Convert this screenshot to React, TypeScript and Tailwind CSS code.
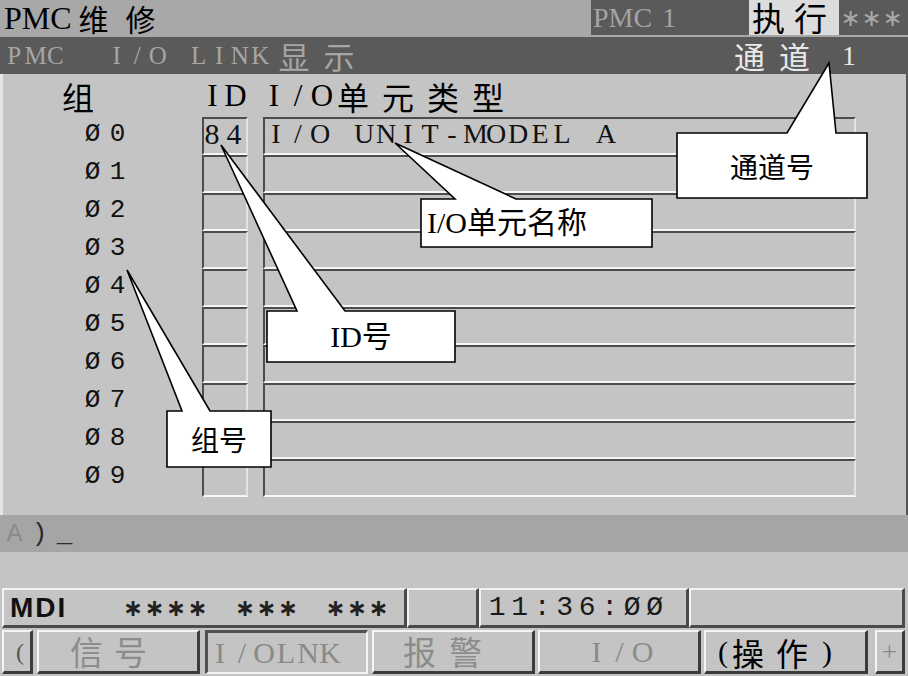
import React from 'react';

const SERIF = "font-['Liberation_Serif','Noto_Sans_CJK_SC',serif]";
const CJK = "font-['Noto_Sans_CJK_SC',sans-serif]";
const MONO = "font-['Liberation_Mono','Noto_Sans_CJK_SC',monospace]";
const SANS = "font-['Liberation_Sans','Noto_Sans_CJK_SC',sans-serif]";
const DEJAVU = "font-['DejaVu_Sans',sans-serif]";

const RAISED =
  'border-t-2 border-l-2 border-b-[3px] border-r-[3px] border-t-[#f4f4f4] border-l-[#f4f4f4] border-b-[#3c3c3c] border-r-[#3c3c3c]';
const PRESSED =
  'border-t-[3px] border-l-[3px] border-b-2 border-r-2 border-t-[#505050] border-l-[#505050] border-b-[#f4f4f4] border-r-[#f4f4f4]';
const SUNKEN =
  'border-2 border-t-[#4c4c4c] border-l-[#4c4c4c] border-b-[#f6f6f6] border-r-[#e2e2e2]';
const STATUS =
  'border-t-2 border-l-2 border-b-[3px] border-r-[3px] border-t-[#f2f2f2] border-l-[#f2f2f2] border-b-[#4a4a4a] border-r-[#4a4a4a]';

function Mono({ text, cw, className = '' }: { text: string; cw: string; className?: string }) {
  return (
    <span className={`inline-flex ${className}`}>
      {Array.from(text).map((c, i) => (
        <span key={i} className={`inline-block text-center shrink-0 ${cw}`}>
          {c === ' ' ? '\u00A0' : c}
        </span>
      ))}
    </span>
  );
}

export default function App() {
  const rows = ['Ø0', 'Ø1', 'Ø2', 'Ø3', 'Ø4', 'Ø5', 'Ø6', 'Ø7', 'Ø8', 'Ø9'];
  return (
    <div className="relative w-[908px] h-[676px] overflow-hidden bg-[#c4c4c4] flex flex-col leading-none">
      {/* title bar */}
      <div className="h-[37px] flex bg-[#a8a8a8] shrink-0">
        <div className="w-[591px] h-[35px] flex items-center pl-[4px]">
          <span className={`${SERIF} text-[32px] text-black`}>PMC</span>
          <span className={`${CJK} text-[30px] text-black ml-[7px] tracking-[17px]`}>维修</span>
        </div>
        <div
          className={`w-[158px] h-[35px] bg-[#5a5a5a] flex items-center pl-[2px] ${SERIF} text-[28px] text-[#a4a4a4]`}
        >
          PMC<span className="ml-[10px]">1</span>
        </div>
        <div
          className={`w-[90px] h-[35px] bg-[#dcdcdc] flex items-center pl-[3px] ${CJK} text-[33px] text-black tracking-[9px]`}
        >
          执行
        </div>
        <div className="w-[69px] h-[35px] bg-[#5a5a5a] flex items-center pl-[1px]">
          <Mono text="∗∗∗" cw="w-[21px]" className={`${DEJAVU} text-[24px] text-[#a8a8a8]`} />
        </div>
      </div>

      {/* sub title bar */}
      <div className="h-[37px] shrink-0 bg-[#5a5a5a] flex items-center">
        <div className="flex items-center pl-[4px] text-[#a6a6a6]">
          <Mono text="PMC  I/O LINK" cw="w-[20.5px]" className={`${SERIF} text-[25px]`} />
          <span className={`${CJK} text-[31px] ml-[8px] tracking-[14px]`}>显示</span>
        </div>
        <div className="ml-auto flex items-center pr-[52px] text-[#e8e8e8]">
          <span className={`${CJK} text-[31px] tracking-[14px]`}>通道</span>
          <span className={`${SERIF} text-[28px] ml-[18px]`}>1</span>
        </div>
      </div>

      {/* main panel */}
      <div className="h-[441px] shrink-0 flex flex-col border-l-[3px] border-l-[#e6e6e6] border-r-2 border-r-[#555555]">
        {/* header */}
        <div className="h-[43px] flex items-center text-black">
          <div className="w-[199px] pl-[59px]">
            <span className={`${CJK} text-[32px]`}>组</span>
          </div>
          <div className="w-[46px] flex items-center">
            <Mono text="ID" cw="w-[23px]" className={`${SERIF} text-[31px] ml-[-1px]`} />
          </div>
          <div className="w-[15px]" />
          <div className="flex items-center">
            <Mono text="I/O" cw="w-[24px]" className={`${SERIF} text-[31px] ml-[-1px]`} />
            <span className={`${CJK} text-[32px] ml-[3px] tracking-[13px]`}>单元类型</span>
          </div>
        </div>
        {/* rows */}
        {rows.map((r, i) => (
          <div key={r} className="h-[38px] flex">
            <div className="w-[199px] pl-[77px] flex items-center">
              <Mono text={r} cw="w-[25px]" className={`${MONO} text-[26px] text-[#111] mt-[-4px]`} />
            </div>
            <div className={`w-[46px] h-[38px] ${SUNKEN} flex items-center`}>
              {i === 0 && (
                <Mono text="84" cw="w-[22px]" className={`${SERIF} text-[30px] text-[#111] ml-[-3px] mt-[-4px]`} />
              )}
            </div>
            <div className="w-[15px]" />
            <div className={`w-[593px] h-[38px] ${SUNKEN} flex items-center`}>
              {i === 0 && (
                <Mono
                  text="I/O UNIT-MODEL A"
                  cw="w-[22px]"
                  className={`${SERIF} text-[28px] text-[#111] mt-[-4px]`}
                />
              )}
            </div>
          </div>
        ))}
      </div>

      {/* command line */}
      <div className="h-[37px] shrink-0 bg-[#a5a5a5] flex items-center pl-[2px]">
        <span className={`inline-flex ${MONO} text-[26px]`}>
          <span className="w-[25px] text-center text-[#8a8a8a]">A</span>
          <span className="w-[25px] text-center text-[#2a2a2a]">)</span>
          <span className="w-[25px] text-center text-[#2a2a2a]">_</span>
        </span>
      </div>

      {/* blank */}
      <div className="h-[36px] shrink-0" />

      {/* status bar */}
      <div className="h-[40px] shrink-0 flex pl-[2px] pr-[3px]">
        <div className={`w-[405px] ${STATUS} flex items-center`}>
          <span className={`${SANS} font-bold text-[28px] text-[#111] w-[118px] pl-[6px] tracking-[2px]`}>MDI</span>
          <Mono text="∗∗∗∗" cw="w-[21.5px]" className={`${DEJAVU} font-bold text-[24px] text-[#222]`} />
          <span className="w-[26px]" />
          <Mono text="∗∗∗" cw="w-[21.5px]" className={`${DEJAVU} font-bold text-[24px] text-[#222]`} />
          <span className="w-[26px]" />
          <Mono text="∗∗∗" cw="w-[21.5px]" className={`${DEJAVU} font-bold text-[24px] text-[#222]`} />
        </div>
        <div className={`w-[72px] ${STATUS}`} />
        <div className={`w-[210px] ${STATUS} flex items-center pl-[5px]`}>
          <Mono text="11:36:ØØ" cw="w-[22.5px]" className={`${MONO} text-[28px] text-[#1a1a1a]`} />
        </div>
        <div className={`flex-1 ${STATUS}`} />
      </div>

      {/* soft keys */}
      <div className="h-[46px] shrink-0 flex pt-[2px] pl-[2px]">
        <div className={`w-[31px] ${RAISED} flex items-center pl-[12px] ${SERIF} text-[24px] text-[#555]`}>(</div>
        <div className={`w-[163px] ml-[4px] ${RAISED} flex items-center pl-[31px] ${CJK} text-[33px] text-[#8c8c8c] tracking-[11px]`}>
          信号
        </div>
        <div className={`w-[163px] ml-[5px] ${PRESSED} flex items-center pl-[1px]`}>
          <Mono text="I/OLNK" cw="w-[22px]" className={`${SERIF} text-[30px] text-[#8a8a8a]`} />
        </div>
        <div className={`w-[163px] ml-[4px] ${RAISED} flex items-center pl-[29px] ${CJK} text-[33px] text-[#8c8c8c] tracking-[13px]`}>
          报警
        </div>
        <div className={`w-[163px] ml-[3px] ${RAISED} flex items-center pl-[45px]`}>
          <Mono text="I/O" cw="w-[23px]" className={`${SERIF} text-[30px] text-[#8a8a8a]`} />
        </div>
        <div className={`w-[164px] ml-[3px] ${RAISED} flex items-center pl-[12px] text-black`}>
          <span className={`${SERIF} text-[30px]`}>(</span>
          <span className={`${CJK} text-[32px] ml-[4px]`}>操</span>
          <span className={`${CJK} text-[32px] ml-[12px]`}>作</span>
          <span className={`${SERIF} text-[30px] ml-[14px]`}>)</span>
        </div>
        <div className={`w-[30px] ml-[7px] ${RAISED} flex items-center justify-center ${SERIF} text-[28px] text-[#8a8a8a]`}>
          +
        </div>
      </div>

      {/* callout annotations */}
      <svg className="absolute inset-0 pointer-events-none" width="908" height="676" viewBox="0 0 908 676">
        <g fill="#ffffff" stroke="#000000" strokeWidth="1.6" strokeLinejoin="miter">
          <path d="M677 133 H787 L829 63 L836 133 H867 V198 H677 Z" />
          <path d="M421 199 H455 L395 143 L516 199 H652 V247 H421 Z" />
          <path d="M267 311 H297 L221 145 L345 311 H455 V362 H267 Z" />
          <path d="M167 411 H182 L127 270 L210 411 H271 V467 H167 Z" />
        </g>
      </svg>
      <div className={`absolute left-[677px] top-[133px] w-[190px] h-[65px] flex items-center justify-center ${CJK} text-[28px] text-black`}>
        通道号
      </div>
      <div className={`absolute left-[421px] top-[199px] w-[231px] h-[48px] flex items-center pl-[6px] ${SERIF} text-[30px] text-black`}>
        I/O单元名称
      </div>
      <div className={`absolute left-[267px] top-[311px] w-[188px] h-[51px] flex items-center justify-center ${SERIF} text-[30px] text-black`}>
        ID号
      </div>
      <div className={`absolute left-[167px] top-[411px] w-[104px] h-[56px] flex items-center justify-center ${CJK} text-[28px] text-black`}>
        组号
      </div>
    </div>
  );
}
